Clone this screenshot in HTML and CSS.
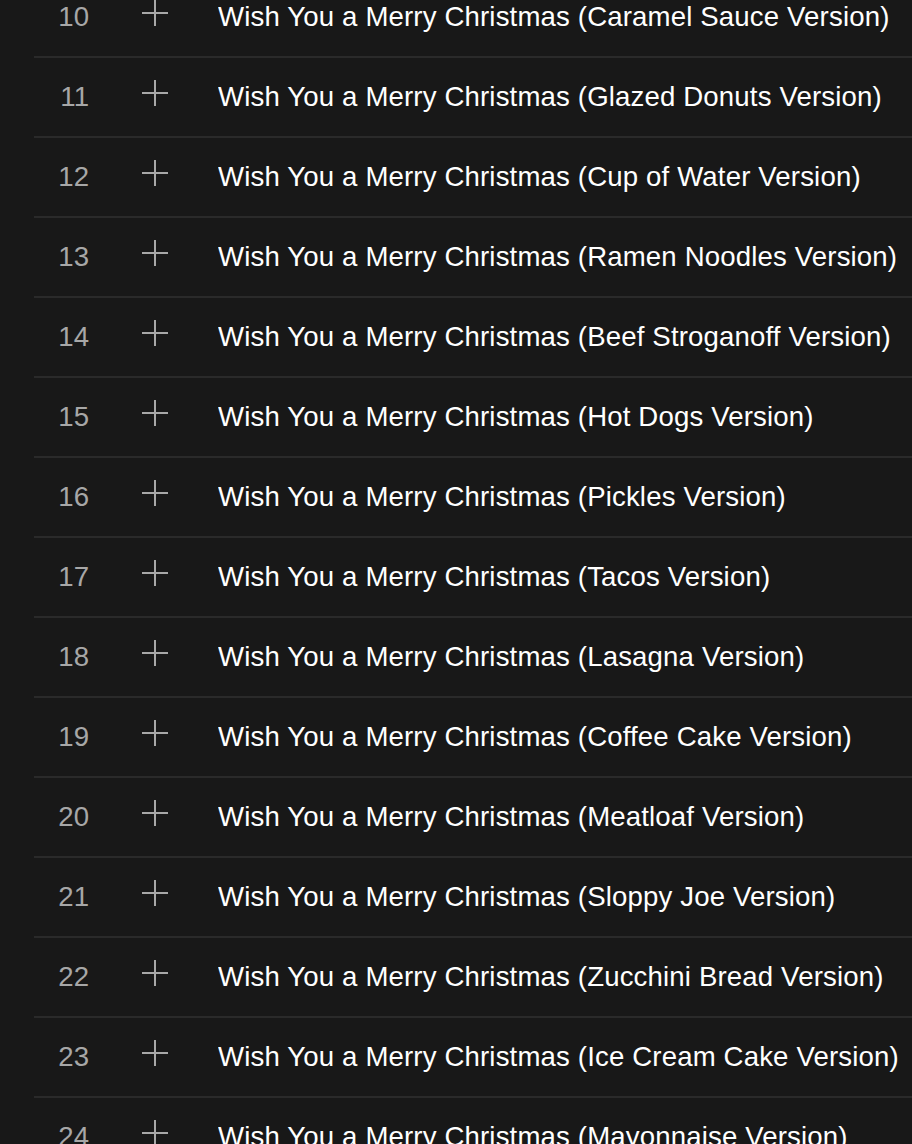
FILE: index.html
```html
<!DOCTYPE html>
<html lang="en">
<head>
<meta charset="utf-8">
<title>Tracklist</title>
<link rel="stylesheet" href="styles.css">
</head>
<body>
<ol class="tracks">
  <li class="track"><span class="num">10</span><span class="add"><svg viewBox="0 0 26 26" width="26" height="26"><path d="M13 0v26M0 13h26"/></svg></span><span class="title">Wish You a Merry Christmas (Caramel Sauce Version)</span></li>
  <li class="track"><span class="num">11</span><span class="add"><svg viewBox="0 0 26 26" width="26" height="26"><path d="M13 0v26M0 13h26"/></svg></span><span class="title">Wish You a Merry Christmas (Glazed Donuts Version)</span></li>
  <li class="track"><span class="num">12</span><span class="add"><svg viewBox="0 0 26 26" width="26" height="26"><path d="M13 0v26M0 13h26"/></svg></span><span class="title">Wish You a Merry Christmas (Cup of Water Version)</span></li>
  <li class="track"><span class="num">13</span><span class="add"><svg viewBox="0 0 26 26" width="26" height="26"><path d="M13 0v26M0 13h26"/></svg></span><span class="title">Wish You a Merry Christmas (Ramen Noodles Version)</span></li>
  <li class="track"><span class="num">14</span><span class="add"><svg viewBox="0 0 26 26" width="26" height="26"><path d="M13 0v26M0 13h26"/></svg></span><span class="title">Wish You a Merry Christmas (Beef Stroganoff Version)</span></li>
  <li class="track"><span class="num">15</span><span class="add"><svg viewBox="0 0 26 26" width="26" height="26"><path d="M13 0v26M0 13h26"/></svg></span><span class="title">Wish You a Merry Christmas (Hot Dogs Version)</span></li>
  <li class="track"><span class="num">16</span><span class="add"><svg viewBox="0 0 26 26" width="26" height="26"><path d="M13 0v26M0 13h26"/></svg></span><span class="title">Wish You a Merry Christmas (Pickles Version)</span></li>
  <li class="track"><span class="num">17</span><span class="add"><svg viewBox="0 0 26 26" width="26" height="26"><path d="M13 0v26M0 13h26"/></svg></span><span class="title">Wish You a Merry Christmas (Tacos Version)</span></li>
  <li class="track"><span class="num">18</span><span class="add"><svg viewBox="0 0 26 26" width="26" height="26"><path d="M13 0v26M0 13h26"/></svg></span><span class="title">Wish You a Merry Christmas (Lasagna Version)</span></li>
  <li class="track"><span class="num">19</span><span class="add"><svg viewBox="0 0 26 26" width="26" height="26"><path d="M13 0v26M0 13h26"/></svg></span><span class="title">Wish You a Merry Christmas (Coffee Cake Version)</span></li>
  <li class="track"><span class="num">20</span><span class="add"><svg viewBox="0 0 26 26" width="26" height="26"><path d="M13 0v26M0 13h26"/></svg></span><span class="title">Wish You a Merry Christmas (Meatloaf Version)</span></li>
  <li class="track"><span class="num">21</span><span class="add"><svg viewBox="0 0 26 26" width="26" height="26"><path d="M13 0v26M0 13h26"/></svg></span><span class="title">Wish You a Merry Christmas (Sloppy Joe Version)</span></li>
  <li class="track"><span class="num">22</span><span class="add"><svg viewBox="0 0 26 26" width="26" height="26"><path d="M13 0v26M0 13h26"/></svg></span><span class="title">Wish You a Merry Christmas (Zucchini Bread Version)</span></li>
  <li class="track"><span class="num">23</span><span class="add"><svg viewBox="0 0 26 26" width="26" height="26"><path d="M13 0v26M0 13h26"/></svg></span><span class="title">Wish You a Merry Christmas (Ice Cream Cake Version)</span></li>
  <li class="track"><span class="num">24</span><span class="add"><svg viewBox="0 0 26 26" width="26" height="26"><path d="M13 0v26M0 13h26"/></svg></span><span class="title">Wish You a Merry Christmas (Mayonnaise Version)</span></li>
</ol>
</body>
</html>
```
FILE: styles.css
```css
html, body {
  margin: 0;
  padding: 0;
  background: #181818;
  height: 100%;
  overflow: hidden;
}

body {
  font-family: "Liberation Sans", Arial, sans-serif;
  font-size: 27.6px;
  color: #ffffff;
}

.tracks {
  list-style: none;
  margin: -22px 0 0 34px;
  padding: 0;
}

.track {
  display: flex;
  align-items: center;
  height: 78px;
  border-bottom: 2px solid #2a2a2a;
  white-space: nowrap;
}

.num {
  width: 55px;
  text-align: right;
  color: #a7a7a7;
  flex: none;
}

.add {
  flex: none;
  width: 26px;
  height: 26px;
  margin-left: 53px;
  margin-bottom: 8px;
  display: flex;
}

.add svg {
  display: block;
  stroke: #a8a8a8;
  stroke-width: 2;
  fill: none;
}

.title {
  margin-left: 50px;
  color: #ffffff;
  letter-spacing: 0.15px;
  overflow: hidden;
}
```
